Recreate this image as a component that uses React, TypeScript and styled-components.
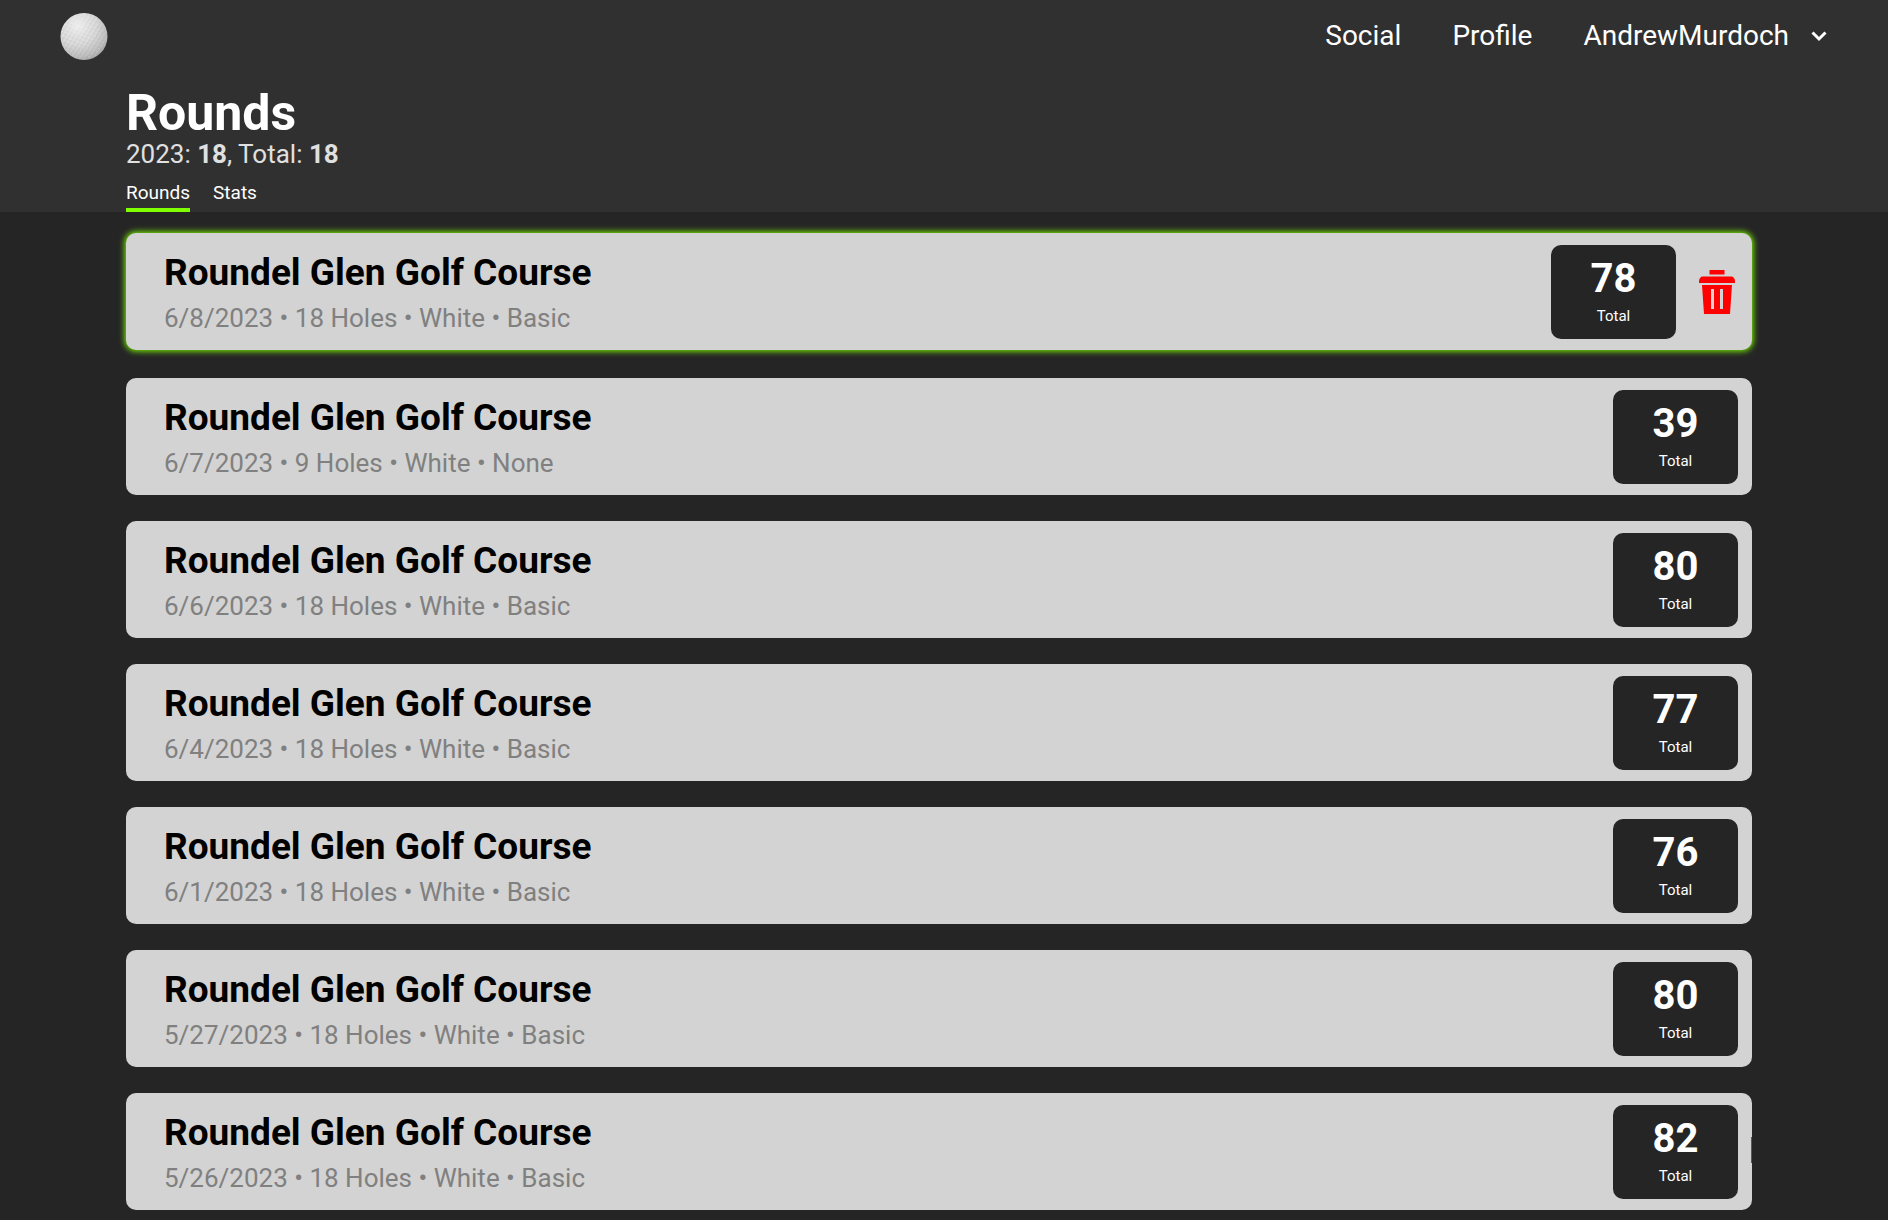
import React, { useState } from "react";
import styled, { createGlobalStyle } from "styled-components";

const GlobalStyle = createGlobalStyle`
  *, *::before, *::after { box-sizing: border-box; }
  body {
    margin: 0;
    background: #252525;
    color: #fff;
    font-family: Roboto, "Liberation Sans", sans-serif;
  }
  h1, h2, p { margin: 0; }
  button { font: inherit; color: inherit; background: none; border: 0; padding: 0; cursor: pointer; }
  a { color: inherit; text-decoration: none; }
`;

const Page = styled.div`
  padding-bottom: 10px;
`;

const Header = styled.header`
  background: #303030;
`;

const NavBar = styled.nav`
  display: flex;
  align-items: center;
  justify-content: space-between;
  height: 72px;
  padding: 0 61px 0 60px;
`;

const LogoLink = styled.a`
  display: block;
  width: 48px;
  height: 48px;
`;

const NavItems = styled.div`
  display: flex;
  align-items: center;
  gap: 51px;
  font-size: 28px;
  line-height: 34px;
`;

const NavLink = styled.a``;

const UserButton = styled.button`
  display: flex;
  align-items: center;
  gap: 22px;
`;

const Heading = styled.div`
  padding: 13px 136px 0 126px;
`;

const Title = styled.h1`
  font-size: 50px;
  line-height: 56px;
  font-weight: 700;
`;

const Summary = styled.p`
  font-size: 26px;
  line-height: 26px;
  color: #e0e0e0;
`;

const Tabs = styled.div`
  display: flex;
  gap: 23px;
  margin-top: 13px;
`;

const Tab = styled.button<{ $active?: boolean }>`
  height: 32px;
  padding-bottom: 2px;
  font-size: 19px;
  line-height: 24px;
  border-bottom: 4px solid ${(p) => (p.$active ? "#7fff00" : "transparent")};
`;

const List = styled.main`
  display: flex;
  flex-direction: column;
  gap: 26px;
  padding: 21px 136px 0 126px;
`;

const Card = styled.article<{ $selected: boolean }>`
  position: relative;
  display: flex;
  align-items: center;
  height: 117px;
  padding: 0 ${(p) => (p.$selected ? 17 : 14)}px 0 38px;
  margin-bottom: ${(p) => (p.$selected ? 2 : 0)}px;
  border-radius: 10px;
  background: #d3d3d3;
  box-shadow: ${(p) => (p.$selected ? "0 0 6px 1px #7fff00" : "none")};

  &:last-child::after {
    content: "";
    position: absolute;
    top: 44px;
    right: 0;
    width: 1px;
    height: 26px;
    background: #a33a3a;
  }
`;

const Info = styled.div`
  flex: 1;
  min-width: 0;
`;

const Course = styled.h2`
  color: #000;
  font-size: 37px;
  line-height: 44px;
  font-weight: 700;
`;

const Details = styled.p`
  margin-top: 8px;
  color: #808080;
  font-size: 26px;
  line-height: 30px;
`;

const ScoreBox = styled.div`
  display: flex;
  flex-direction: column;
  align-items: center;
  justify-content: center;
  gap: 5px;
  width: 125px;
  height: 94px;
  padding-bottom: 3px;
  border-radius: 10px;
  background: #252525;
`;

const Score = styled.strong`
  font-size: 40px;
  line-height: 46px;
`;

const ScoreLabel = styled.span`
  font-size: 15px;
  line-height: 18px;
`;

const DeleteButton = styled.button`
  display: flex;
  margin-left: 23px;
`;

const GolfBall = () => (
  <svg width="48" height="48" viewBox="0 0 48 48" role="img" aria-label="Home">
    <defs>
      <radialGradient id="ball" cx="0.36" cy="0.28" r="0.76">
        <stop offset="0" stopColor="#eeeeee" />
        <stop offset="0.5" stopColor="#dddddd" />
        <stop offset="0.85" stopColor="#bebebe" />
        <stop offset="1" stopColor="#a8a8a8" />
      </radialGradient>
      <pattern id="dimples" width="6" height="5" patternUnits="userSpaceOnUse" patternTransform="rotate(-18)">
        <circle cx="1.5" cy="1.25" r="1.4" fill="#777" fillOpacity="0.2" />
        <circle cx="4.5" cy="3.75" r="1.4" fill="#777" fillOpacity="0.2" />
        <circle cx="1.9" cy="1.8" r="1" fill="#fff" fillOpacity="0.3" />
        <circle cx="4.9" cy="4.3" r="1" fill="#fff" fillOpacity="0.3" />
      </pattern>
      <radialGradient id="fade" cx="0.36" cy="0.25" r="0.7">
        <stop offset="0.1" stopColor="#fff" stopOpacity="0.15" />
        <stop offset="0.5" stopColor="#fff" />
      </radialGradient>
      <mask id="dimpleFade">
        <circle cx="24" cy="24" r="23" fill="url(#fade)" />
      </mask>
    </defs>
    <circle cx="24" cy="24.500" r="23.500" fill="url(#ball)" />
    <circle cx="24" cy="24.500" r="23" fill="url(#dimples)" mask="url(#dimpleFade)" />
  </svg>
);

const Chevron = () => (
  <svg width="16" height="11" viewBox="0 0 16 11" fill="none" aria-hidden="true">
    <path d="M1.5 1.5 8 8l6.500-6.500" stroke="#fff" strokeWidth="3" />
  </svg>
);

const TrashIcon = () => (
  <svg width="36" height="44" viewBox="0 0 36 44" fill="#f00" aria-hidden="true">
    <path d="M11 0h14q.5 0 .5.500v4h-15v-4q0-.5.500-.5z" />
    <path d="M4 6.500h28c2.500 0 4 2 4 5v1.500H0v-1.500c0-3 1.500-5 4-5z" />
    <path fillRule="evenodd" d="M3 15h30l-2 29H5zM12 19v20h3V19zm9 0v20h3V19z" />
  </svg>
);

interface Round {
  date: string;
  holes: number;
  stats: string;
  total: number;
}

const rounds: Round[] = [
  { date: "6/8/2023", holes: 18, stats: "Basic", total: 78 },
  { date: "6/7/2023", holes: 9, stats: "None", total: 39 },
  { date: "6/6/2023", holes: 18, stats: "Basic", total: 80 },
  { date: "6/4/2023", holes: 18, stats: "Basic", total: 77 },
  { date: "6/1/2023", holes: 18, stats: "Basic", total: 76 },
  { date: "5/27/2023", holes: 18, stats: "Basic", total: 80 },
  { date: "5/26/2023", holes: 18, stats: "Basic", total: 82 },
];

export default function App() {
  const [selected, setSelected] = useState(0);
  return (
    <Page>
      <GlobalStyle />
      <Header>
        <NavBar>
          <LogoLink href="#"><GolfBall /></LogoLink>
          <NavItems>
            <NavLink href="#social">Social</NavLink>
            <NavLink href="#profile">Profile</NavLink>
            <UserButton type="button">AndrewMurdoch<Chevron /></UserButton>
          </NavItems>
        </NavBar>
        <Heading>
          <Title>Rounds</Title>
          <Summary>2023: <b>18</b>, Total: <b>18</b></Summary>
          <Tabs>
            <Tab type="button" $active>Rounds</Tab>
            <Tab type="button">Stats</Tab>
          </Tabs>
        </Heading>
      </Header>
      <List>
        {rounds.map((r, i) => (
          <Card key={r.date} $selected={i === selected} onClick={() => setSelected(i)}>
            <Info>
              <Course>Roundel Glen Golf Course</Course>
              <Details>{`${r.date} • ${r.holes} Holes • White • ${r.stats}`}</Details>
            </Info>
            <ScoreBox>
              <Score>{r.total}</Score>
              <ScoreLabel>Total</ScoreLabel>
            </ScoreBox>
            {i === selected && (
              <DeleteButton type="button" aria-label="Delete round"><TrashIcon /></DeleteButton>
            )}
          </Card>
        ))}
      </List>
    </Page>
  );
}
